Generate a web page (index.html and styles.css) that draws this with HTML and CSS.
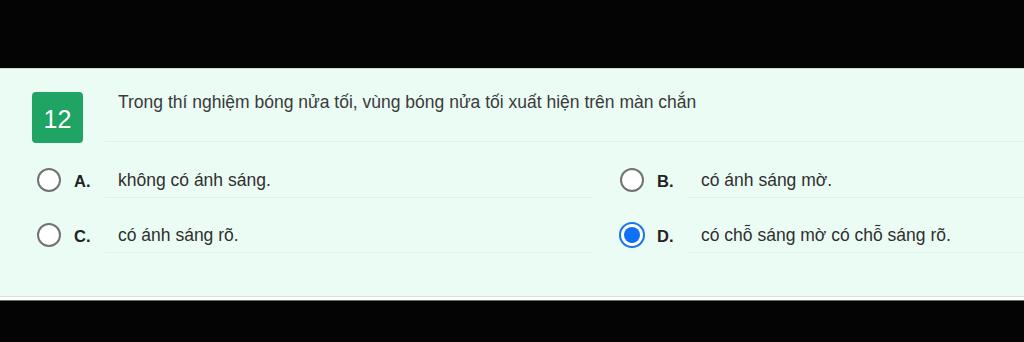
FILE: index.html
```html
<!doctype html>
<html lang="vi">
<head>
	<meta charset="UTF-8">
	<title>Câu hỏi 12</title>
	<link rel="stylesheet" href="styles.css">
</head>
<body>
	<div class="top-bar"></div>
	<div class="quiz">
		<div class="question">
			<span class="question-num">12</span>
			<div class="question-text">Trong thí nghiệm bóng nửa tối, vùng bóng nửa tối xuất hiện trên màn chắn</div>
		</div>
		<div class="options">
			<label class="option">
				<span class="radio"></span>
				<span class="letter">A.</span>
				<span class="answer">không có ánh sáng.</span>
			</label>
			<label class="option">
				<span class="radio"></span>
				<span class="letter">B.</span>
				<span class="answer">có ánh sáng mờ.</span>
			</label>
			<label class="option">
				<span class="radio"></span>
				<span class="letter">C.</span>
				<span class="answer">có ánh sáng rõ.</span>
			</label>
			<label class="option">
				<span class="radio checked"></span>
				<span class="letter">D.</span>
				<span class="answer">có chỗ sáng mờ có chỗ sáng rõ.</span>
			</label>
		</div>
	</div>
	<div class="quiz-foot"></div>
</body>
</html>
```

FILE: styles.css
```css
html, body {
	height: 100%;
}
body {
	margin: 0;
	padding: 0;
	background: #040404;
	font: 17.5px/20px "Liberation Sans", Arial, sans-serif;
	color: #333;
}
.top-bar {
	height: 68px;
}
/* khung câu hỏi */
.quiz {
	background: #ebfcf4;
	padding: 23px 0 43px;
	border-top: 1px solid #cfd8d3;
	border-bottom: 1px solid #dadfdc;
}
.question {
	display: flex;
	align-items: flex-start;
}
.question-num {
	width: 51px;
	height: 51px;
	margin-left: 32px;
	border-radius: 4px;
	background: #1fa463;
	color: #fff;
	font-size: 25px;
	line-height: 54px;
	text-align: center;
}
.question-text {
	flex: 1;
	height: 49px;
	margin-left: 22px;
	padding: 0 13px;
	border-bottom: 1px solid #e1efe8;
	color: #3a3a3a;
}
/* đáp án */
.options {
	display: grid;
	grid-template-columns: 556px 1fr;
	column-gap: 27px;
	padding-left: 37px;
}
.option {
	display: flex;
	align-items: flex-start;
}
.radio {
	width: 20px;
	height: 20px;
	margin-top: 25px;
	border: 2px solid #737373;
	border-radius: 50%;
	background: #fff;
	flex-shrink: 0;
}
.radio.checked {
	width: 22px;
	height: 22px;
	margin-top: 24px;
	margin-left: -1px;
	margin-right: -1px;
	border-color: #1a73e8;
	position: relative;
}
.radio.checked:after {
	content: "";
	position: absolute;
	left: 3px;
	top: 3px;
	width: 16px;
	height: 16px;
	border-radius: 50%;
	background: #0f6ff5;
}
.letter {
	width: 31px;
	margin-left: 13px;
	padding-top: 28px;
	font-size: 16.5px;
	font-weight: bold;
	color: #222;
}
.answer {
	flex: 1;
	padding: 27px 13px 7px;
	border-bottom: 1px solid #e1efe8;
	color: #2f2f2f;
}
.quiz-foot {
	height: 3px;
	background: #fff;
	border-bottom: 1px solid #6a6a6a;
}
```
